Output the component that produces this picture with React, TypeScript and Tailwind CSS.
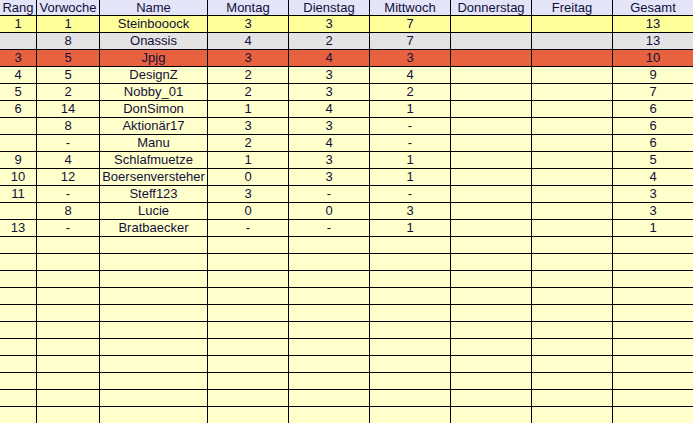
import React from "react";

const headers = ["Rang", "Vorwoche", "Name", "Montag", "Dienstag", "Mittwoch", "Donnerstag", "Freitag", "Gesamt"];

const rows: string[][] = [
  ["1", "1", "Steinbooock", "3", "3", "7", "", "", "13"],
  ["", "8", "Onassis", "4", "2", "7", "", "", "13"],
  ["3", "5", "Jpjg", "3", "4", "3", "", "", "10"],
  ["4", "5", "DesignZ", "2", "3", "4", "", "", "9"],
  ["5", "2", "Nobby_01", "2", "3", "2", "", "", "7"],
  ["6", "14", "DonSimon", "1", "4", "1", "", "", "6"],
  ["", "8", "Aktionär17", "3", "3", "-", "", "", "6"],
  ["", "-", "Manu", "2", "4", "-", "", "", "6"],
  ["9", "4", "Schlafmuetze", "1", "3", "1", "", "", "5"],
  ["10", "12", "Boersenversteher", "0", "3", "1", "", "", "4"],
  ["11", "-", "Steff123", "3", "-", "-", "", "", "3"],
  ["", "8", "Lucie", "0", "0", "3", "", "", "3"],
  ["13", "-", "Bratbaecker", "-", "-", "1", "", "", "1"],
];

const emptyCount = 11;

function rowBg(i: number): string {
  if (i === 0) return "bg-[#ffff99]";
  if (i === 1) return "bg-[#e3e3e3]";
  if (i === 2) return "bg-[#e9623f]";
  return "bg-[#ffffcc]";
}

export default function App() {
  const all = [...rows, ...Array.from({ length: emptyCount }, () => Array(9).fill(""))];
  return (
    <div
      className="w-[693px] h-[423px] overflow-hidden bg-black text-[13px] text-[#10103a]"
      style={{ fontFamily: '"Liberation Sans", Arial, sans-serif' }}
    >
      <div className="grid grid-cols-[36px_62px_107px_80px_80px_80px_80px_80px_80px] grid-rows-[15px_repeat(24,16px)] gap-px">
        {headers.map((h) => (
          <div key={h} className="bg-[#e4e4f9] flex items-center justify-center leading-[15px] whitespace-nowrap">
            {h}
          </div>
        ))}
        {all.map((r, i) =>
          r.map((c, j) => (
            <div
              key={`${i}-${j}`}
              className={`${rowBg(i)} flex items-center justify-center leading-[16px] whitespace-nowrap`}
            >
              {c}
            </div>
          ))
        )}
      </div>
    </div>
  );
}
